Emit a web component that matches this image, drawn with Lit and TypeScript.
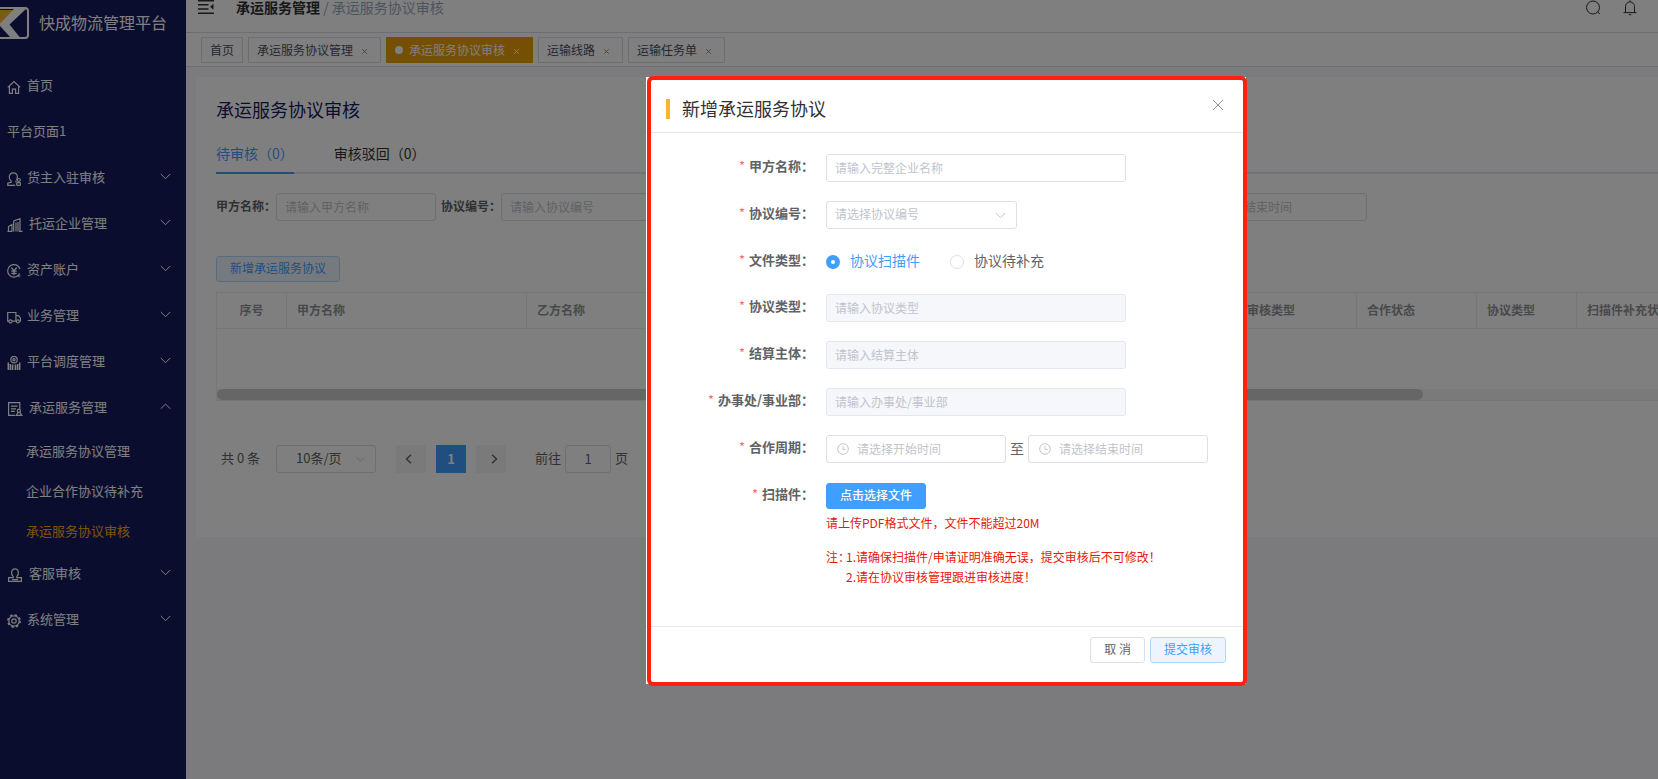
import { LitElement, html, css, svg, nothing } from "lit";
import { customElement, state } from "lit/decorators.js";
import { classMap } from "lit/directives/class-map.js";

const base = css`
  * {
    box-sizing: border-box;
  }
  button,
  input,
  select {
    font: inherit;
    color: inherit;
    margin: 0;
  }
  button {
    cursor: pointer;
  }
  svg {
    display: block;
    flex: none;
    fill: none;
    stroke: currentColor;
  }
  .field {
    height: 28px;
    padding: 0 8px 2px;
    border: 1px solid #dcdfe6;
    border-radius: 3px;
    background: #fff;
    color: #606266;
    font-size: 12px;
    line-height: 24px;
    outline: none;
  }
  .field::placeholder {
    color: #c0c4cc;
    opacity: 1;
  }
  .field.unset {
    color: #c0c4cc;
  }
  .field:disabled {
    background: #f5f7fa;
    border-color: #e4e7ed;
  }
  .with-icon {
    position: relative;
    display: flex;
  }
  .with-icon .field {
    width: 100%;
    padding-left: 30px;
  }
  .with-icon svg {
    position: absolute;
    left: 11px;
    top: 8px;
    color: #c0c4cc;
  }
  .select {
    position: relative;
    display: flex;
  }
  .select select {
    width: 100%;
    appearance: none;
    padding-right: 26px;
  }
  .select svg {
    position: absolute;
    right: 11px;
    top: 11px;
    color: #c0c4cc;
    pointer-events: none;
  }
  .plain {
    height: 26px;
    padding: 0 13px 2px;
    border: 1px solid #dcdfe6;
    border-radius: 3px;
    background: #fff;
    color: #606266;
    font-size: 12px;
    line-height: 22px;
    white-space: nowrap;
  }
  .soft {
    background: #ecf5ff;
    border-color: #b3d8ff;
    color: #409eff;
  }
  .solid {
    background: #409eff;
    border-color: #409eff;
    color: #fff;
    font-weight: 500;
  }
`;

const clock = html`<svg width="12" height="12" viewBox="0 0 12 12" aria-hidden="true">
  <circle cx="6" cy="6" r="5.3" /><path d="M6 2.8V6.4H8.6" />
</svg>`;

const chevron = (up = false, w = 11) => html`<svg width=${w} height="7" viewBox="0 0 11 7" aria-hidden="true">
  <path d=${up ? "M.8 5.7 5.5 1l4.7 4.7" : "M.8 1l4.7 4.7L10.2 1"} />
</svg>`;

const icons: Record<string, { w: number; shape: unknown }> = {
  home: { w: 14, shape: svg`<path d="M.8 7.4 7 1.6l6.2 5.8M2.4 6v7.3h3V9.2h3.2v4.1h3V6" />` },
  owner: {
    w: 14,
    shape: svg`<path d="M4.2 9C2.6 7.6 2 6.2 2.3 4.3 2.7 2.2 4.2.8 6.3.8s3.7 1.3 4 3.4c.2 1.6-.1 2.6-.8 3.6M4.2 8.8v1.4L.8 11.3v2h7.4M9 8.5v2" /><circle cx="11.8" cy="8" r="1.5" /><rect x="9.7" y="10.7" width="3.8" height="2.7" rx="1" />`,
  },
  company: {
    w: 16,
    shape: svg`<path d="M1.5 13.5V8.5L5 6.5V13.5M6.7 13.5V3L13 .8v12.7M9 13.5V4.5M11 13.5V4M.5 13.4H5.5M12 13.4h3.5" />`,
  },
  account: {
    w: 14,
    shape: svg`<path d="M12.7 9.5A6.3 6.3 0 1 1 13 5M11 12.2l2.4-.2M4.3 3.5 7 6.7l2.7-3.2M7 6.7v4.5M4.3 7.2h5.4M4.3 9.3h5.4" />`,
  },
  truck: {
    w: 14,
    shape: svg`<path d="M2 11.2H.7V2.5h8.2v8.7H5M8.9 5.6h2.6l2 2.6v3h-1M8.9 11.2h.4" /><circle cx="3.5" cy="11.4" r="1.5" /><circle cx="10.9" cy="11.4" r="1.5" />`,
  },
  dispatch: {
    w: 14,
    shape: svg`<circle cx="7" cy="3.7" r="3.2" /><circle cx="7" cy="3.7" r="1.1" /><path d="M1.3 13.9V6.5M3.3 13.9V8M10.7 13.9V8M12.7 13.9V6.5" stroke-width="1.5" /><path d="M5.5 13.9V8.5M8.5 13.9V8.5" stroke-width="1.8" />`,
  },
  service: {
    w: 16,
    shape: svg`<path d="M8 13.3H1.6V.7h11.2v6M4 4.2h6.5M4 6.8h5M4 9.4h3.8" /><circle cx="11.9" cy="8.8" r="1.6" /><path d="M11.2 10.4l-2 3h5.6l-2-3" />`,
  },
  support: {
    w: 16,
    shape: svg`<path d="M6.3 8.6C5 7.5 4.3 6 4.6 4.2 4.9 2.3 6.2.8 8 .8s3.1 1.5 3.4 3.4c.3 1.8-.4 3.3-1.7 4.4M6.3 8.4v1.3H1.6v3.7h12.8V9.7H9.7V8.4M5 11.6h6" />`,
  },
  system: {
    w: 14,
    shape: svg`<circle cx="7" cy="7" r="5.2" /><circle cx="7" cy="7" r="2.2" /><circle cx="7" cy="7" r="6.1" stroke-dasharray="2.4 2.39" stroke-width="1.6" />`,
  },
};

interface MenuItem {
  label: string;
  icon?: string;
  folds?: boolean;
  open?: boolean;
  children?: string[];
}

@customElement("side-menu")
export class SideMenu extends LitElement {
  static styles = [
    base,
    css`
      :host {
        display: block;
        width: 186px;
        flex: none;
        background: #161a5e;
        color: #fff;
        font-size: 13px;
      }
      .brand {
        display: flex;
        align-items: center;
        gap: 10px;
        height: 63px;
        padding-bottom: 17px;
        font-size: 16px;
        white-space: nowrap;
      }
      .brand span {
        padding-bottom: 2px;
      }
      ul {
        list-style: none;
        margin: 0;
        padding: 0;
      }
      .item {
        display: flex;
        align-items: center;
        gap: 6px;
        width: 100%;
        height: 46px;
        padding: 0 15px 0 7px;
        border: 0;
        background: none;
        text-align: left;
      }
      .glyph {
        margin-top: 2px;
      }
      .name {
        flex: 1;
        padding-bottom: 3px;
      }
      .item > svg:last-child {
        margin-bottom: 3px;
      }
      .sub {
        display: block;
        padding-left: 26px;
        line-height: 40px;
        color: #fff;
        text-decoration: none;
      }
      .current {
        color: #f9a80f;
      }
    `,
  ];

  @state() items: MenuItem[] = [
    { label: "首页", icon: "home" },
    { label: "平台页面1" },
    { label: "货主入驻审核", icon: "owner", folds: true },
    { label: "托运企业管理", icon: "company", folds: true },
    { label: "资产账户", icon: "account", folds: true },
    { label: "业务管理", icon: "truck", folds: true },
    { label: "平台调度管理", icon: "dispatch", folds: true },
    {
      label: "承运服务管理",
      icon: "service",
      folds: true,
      open: true,
      children: ["承运服务协议管理", "企业合作协议待补充", "承运服务协议审核"],
    },
    { label: "客服审核", icon: "support", folds: true },
    { label: "系统管理", icon: "system", folds: true },
  ];

  private toggle(item: MenuItem) {
    if (item.folds) this.items = this.items.map((i) => (i === item ? { ...i, open: !i.open } : i));
  }

  render() {
    return html`
      <div class="brand">
        <svg width="29" height="32" viewBox="0 0 29 32" aria-hidden="true">
          <path d="M0 3H14L0 17Z" fill="#f9b52b" stroke="none" />
          <path d="M14 2H26L9.5 17.5 20 30.5H10.5L0 19V16.5Z" fill="#fff" stroke="none" />
          <rect x="-6" y="1" width="34" height="30" rx="3" stroke="#fff" stroke-width="2" />
        </svg>
        <span>快成物流管理平台</span>
      </div>
      <nav>
        <ul>
          ${this.items.map((item) => {
            const icon = item.icon ? icons[item.icon] : undefined;
            return html`<li>
              <button class="item" @click=${() => this.toggle(item)}>
                ${icon
                  ? html`<svg class="glyph" width=${icon.w} height="14" viewBox="0 0 ${icon.w} 14" stroke-width="1.2" aria-hidden="true">${icon.shape}</svg>`
                  : nothing}
                <span class="name">${item.label}</span>
                ${item.folds ? chevron(item.open) : nothing}
              </button>
              ${item.open && item.children
                ? html`<ul>
                    ${item.children.map(
                      (c) => html`<li>
                        <a href="#" class=${classMap({ sub: true, current: c === "承运服务协议审核" })}>${c}</a>
                      </li>`
                    )}
                  </ul>`
                : nothing}
            </li>`;
          })}
        </ul>
      </nav>
    `;
  }
}

@customElement("agreement-dialog")
export class AgreementDialog extends LitElement {
  static styles = [
    base,
    css`
      :host {
        position: relative;
        display: block;
        width: 600px;
        background: #fff;
        color: #606266;
      }
      :host::after {
        content: "";
        position: absolute;
        inset: -1px -1px -2px 1px;
        border: 4px solid #ff2012;
        border-radius: 6px;
        pointer-events: none;
      }
      header {
        display: flex;
        align-items: center;
        height: 56px;
        padding: 8px 22px 0 20px;
        border-bottom: 1px solid #e8e8e8;
      }
      .bar {
        width: 4px;
        height: 20px;
        margin-right: 12px;
        background: #f9b52b;
      }
      h2 {
        flex: 1;
        margin: 0;
        padding-bottom: 2px;
        font-size: 18px;
        font-weight: 400;
        line-height: 24px;
        color: #303133;
      }
      .close {
        display: flex;
        padding: 0;
        margin-bottom: 7px;
        border: 0;
        background: none;
        color: #909399;
      }
      form {
        display: flex;
        flex-direction: column;
        gap: 19px;
        padding: 21px 38px 39px 0;
      }
      .row {
        display: grid;
        grid-template-columns: 168px 1fr;
        column-gap: 12px;
      }
      .label {
        text-align: right;
        font-size: 13px;
        font-weight: 700;
        line-height: 23px;
        white-space: nowrap;
      }
      .label::before {
        content: "*";
        margin-right: 4px;
        color: #f56c6c;
        font-weight: 400;
      }
      .wide {
        width: 300px;
      }
      .mid {
        width: 191px;
      }
      .radios {
        display: flex;
        align-items: center;
        gap: 30px;
        height: 27px;
        font-size: 14px;
        line-height: 20px;
      }
      .radio {
        display: flex;
        align-items: center;
        gap: 10px;
      }
      .radio span {
        padding-bottom: 3px;
      }
      .radio input {
        appearance: none;
        width: 14px;
        height: 14px;
        border: 1px solid #dcdfe6;
        border-radius: 50%;
        background: #fff;
      }
      .radio input:checked {
        border: 5px solid #409eff;
      }
      .radio:has(input:checked) {
        color: #409eff;
      }
      .range {
        display: flex;
        align-items: center;
        gap: 4px;
        font-size: 14px;
      }
      .range label {
        padding-bottom: 3px;
      }
      .range .with-icon {
        width: 180px;
      }
      .upload {
        display: flex;
        flex-direction: column;
        align-items: flex-start;
        padding-top: 1px;
        font-size: 12px;
        line-height: 20px;
        color: #e7180b;
      }
      .tip {
        margin: 4px 0 14px;
      }
      .notes {
        display: flex;
      }
      .notes span {
        width: 20px;
        white-space: nowrap;
      }
      .notes p {
        margin: 0;
      }
      footer {
        display: flex;
        justify-content: flex-end;
        gap: 5px;
        padding: 10px 20px 21px;
        border-top: 1px solid #e8e8e8;
      }
    `,
  ];

  private textRow(id: string, label: string, placeholder: string, disabled: boolean) {
    return html`<div class="row">
      <label class="label" for=${id}>${label}：</label>
      <div><input id=${id} class="field wide" type="text" placeholder=${placeholder} ?disabled=${disabled} /></div>
    </div>`;
  }

  render() {
    return html`
      <header>
        <span class="bar"></span>
        <h2>新增承运服务协议</h2>
        <button class="close" aria-label="关闭">
          <svg width="12" height="12" viewBox="0 0 12 12"><path d="M1 1l10 10M11 1 1 11" /></svg>
        </button>
      </header>
      <form @submit=${(e: Event) => e.preventDefault()}>
        ${this.textRow("party", "甲方名称", "请输入完整企业名称", false)}
        <div class="row">
          <label class="label" for="number">协议编号：</label>
          <div class="select mid">
            <select id="number" class="field unset"><option>请选择协议编号</option></select>
            ${chevron()}
          </div>
        </div>
        <div class="row">
          <span class="label" id="kind">文件类型：</span>
          <div class="radios" role="radiogroup" aria-labelledby="kind">
            <label class="radio"><input type="radio" name="kind" checked /><span>协议扫描件</span></label>
            <label class="radio"><input type="radio" name="kind" /><span>协议待补充</span></label>
          </div>
        </div>
        ${this.textRow("type", "协议类型", "请输入协议类型", true)}
        ${this.textRow("subject", "结算主体", "请输入结算主体", true)}
        ${this.textRow("office", "办事处/事业部", "请输入办事处/事业部", true)}
        <div class="row">
          <label class="label" for="from">合作周期：</label>
          <div class="range">
            <div class="with-icon">${clock}<input id="from" class="field" placeholder="请选择开始时间" /></div>
            <label for="to">至</label>
            <div class="with-icon">${clock}<input id="to" class="field" placeholder="请选择结束时间" /></div>
          </div>
        </div>
        <div class="row">
          <span class="label">扫描件：</span>
          <div class="upload">
            <button type="button" class="plain solid">点击选择文件</button>
            <p class="tip">请上传PDF格式文件，文件不能超过20M</p>
            <div class="notes">
              <span>注：</span>
              <div>
                <p>1.请确保扫描件/申请证明准确无误，提交审核后不可修改！</p>
                <p>2.请在协议审核管理跟进审核进度！</p>
              </div>
            </div>
          </div>
        </div>
      </form>
      <footer>
        <button class="plain">取 消</button>
        <button class="plain soft">提交审核</button>
      </footer>
    `;
  }
}

@customElement("app-root")
export class AppRoot extends LitElement {
  static styles = [
    base,
    css`
      :host {
        display: flex;
        min-height: 100vh;
        overflow: hidden;
        background: #f6f6fa;
        color: #303133;
        font-family: "Noto Sans CJK SC", "Noto Sans", sans-serif;
        font-size: 14px;
      }
      .page {
        flex: 1;
        min-width: 0;
      }
      .top {
        display: flex;
        align-items: flex-start;
        height: 33px;
        padding: 0 20px 0 12px;
        background: #fff;
        border-bottom: 1px solid #d8dce5;
        line-height: 14px;
      }
      .icon {
        display: flex;
        padding: 0;
        border: 0;
        background: none;
      }
      .crumbs {
        flex: 1;
        margin-left: 22px;
        color: #97a8be;
      }
      .crumbs b {
        color: #303133;
      }
      .tools {
        display: flex;
        gap: 21px;
      }
      .tabs {
        display: flex;
        gap: 5px;
        padding: 4px 15px 3px;
        background: #fff;
        border-bottom: 1px solid #d8dce5;
      }
      .tab {
        display: flex;
        align-items: center;
        height: 26px;
        padding: 0 8px 1px;
        border: 1px solid #d8dce5;
        background: #fff;
        color: #495060;
        font-size: 12px;
        white-space: nowrap;
      }
      .tab svg {
        margin: 3px 5px 0 9px;
        color: #8a8f99;
      }
      .tab.active {
        background: #eb9f06;
        border-color: #eb9f06;
        color: #fff;
      }
      .tab.active svg {
        color: #fff;
      }
      .dot {
        width: 8px;
        height: 8px;
        margin-right: 6px;
        border-radius: 50%;
        background: #fff;
      }
      .card {
        margin: 10px 0 0 10px;
        padding: 19px 0 64px 20px;
        background: #fff;
      }
      h1 {
        margin: 0;
        color: #161a5e;
        font-size: 18px;
        font-weight: 400;
        line-height: 26px;
      }
      .views {
        display: flex;
        gap: 40px;
        margin-top: 12px;
        border-bottom: 2px solid #e4e7ed;
      }
      .view {
        height: 40px;
        margin-bottom: -2px;
        padding: 0;
        border: 0;
        border-bottom: 2px solid transparent;
        background: none;
      }
      .view.active {
        color: #409eff;
        border-color: #409eff;
      }
      .search {
        display: flex;
        align-items: center;
        margin-top: 19px;
        font-size: 12px;
        white-space: nowrap;
      }
      .search > label {
        width: 60px;
        padding-bottom: 3px;
        color: #606266;
        font-weight: 700;
      }
      .search > .field {
        width: 160px;
        margin-right: 5px;
      }
      .search .with-icon {
        width: 190px;
      }
      .search .to {
        width: 36px;
        text-align: center;
        font-weight: 400;
      }
      .add {
        margin: 35px 0 10px;
      }
      .grid {
        overflow: hidden;
        border: 1px solid #ebeef5;
        border-right: 0;
      }
      table {
        width: 1771px;
        table-layout: fixed;
        border-collapse: separate;
        border-spacing: 0;
      }
      th {
        height: 36px;
        padding: 0 10px 2px;
        border-right: 1px solid #ebeef5;
        border-bottom: 1px solid #ebeef5;
        color: #909399;
        font-size: 12px;
        font-weight: 700;
        text-align: left;
      }
      th:first-child {
        text-align: center;
      }
      .empty {
        height: 60px;
        padding: 0;
      }
      .track {
        height: 11px;
        background: #f5f5f5;
      }
      .thumb {
        width: 83.7%;
        height: 11px;
        border-radius: 6px;
        background: #ccc;
      }
      .pager {
        display: flex;
        align-items: center;
        margin-top: 44px;
        padding-left: 5px;
        font-size: 13px;
        color: #606266;
      }
      .pager > span {
        padding-bottom: 3px;
      }
      .size {
        width: 100px;
        margin: 0 20px 0 16px;
      }
      .size .field {
        padding-left: 19px;
        font-size: 13px;
      }
      .num {
        width: 30px;
        height: 28px;
        margin-right: 10px;
        padding: 0 0 1px;
        border: 0;
        background: #f4f4f5;
        display: grid;
        place-items: center;
        font-weight: 700;
      }
      .prev {
        padding-right: 6px;
      }
      .next {
        padding-left: 6px;
      }
      .num.active {
        background: #409eff;
        color: #fff;
      }
      .jump {
        display: flex;
        align-items: center;
        gap: 4px;
        margin-left: 19px;
      }
      .jump span {
        padding-bottom: 3px;
      }
      .jump .field {
        width: 46px;
        text-align: center;
        font-size: 13px;
      }
      .overlay {
        position: fixed;
        inset: 0;
        display: flex;
        justify-content: center;
        align-items: flex-start;
        padding: 77px 0 0 234px;
        overflow: auto;
        background: rgba(0, 0, 0, 0.5);
      }
    `,
  ];

  @state() view = 0;

  private tabs = ["首页", "承运服务协议管理", "承运服务协议审核", "运输线路", "运输任务单"];
  private columns: [string, number][] = [
    ["序号", 70],
    ["甲方名称", 240],
    ["乙方名称", 240],
    ["协议编号", 170],
    ["合作周期", 180],
    ["提交时间", 120],
    ["审核类型", 120],
    ["合作状态", 120],
    ["协议类型", 100],
    ["扫描件补充状态", 140],
    ["操作", 271],
  ];

  render() {
    return html`
      <side-menu></side-menu>
      <div class="page">
        <div class="top">
          <button class="icon" aria-label="收起菜单">
            <svg width="16" height="15" viewBox="0 0 16 15" stroke-width="1.6">
              <path d="M0 .8h16M0 4.8h10.5M0 9h10.5M0 13.3h16" />
              <path d="M15.5 3.8v6L12 6.8Z" fill="currentColor" stroke="none" />
            </svg>
          </button>
          <div class="crumbs"><b>承运服务管理</b> / 承运服务协议审核</div>
          <div class="tools">
            <button class="icon" aria-label="搜索">
              <svg width="16" height="16" viewBox="0 0 16 16">
                <circle cx="8" cy="7.5" r="6.5" /><path d="m12.3 11.5 2.5 2.5" />
              </svg>
            </button>
            <button class="icon" aria-label="通知">
              <svg width="16" height="16" viewBox="0 0 16 16">
                <path d="M8 .4v1.4M3.5 12.5V6.4a4.5 4.5 0 0 1 9 0v6.1M1.5 12.6h13M6.8 14.7h2.4" />
              </svg>
            </button>
          </div>
        </div>
        <nav class="tabs">
          ${this.tabs.map(
            (t, i) => html`<button class=${classMap({ tab: true, active: i === 2 })}>
              ${i === 2 ? html`<span class="dot"></span>` : nothing}${t}${i
                ? html`<svg width="5" height="5" viewBox="0 0 5 5" aria-hidden="true"><path d="M.3.3l4.4 4.4M4.7.3.3 4.7" /></svg>`
                : nothing}
            </button>`
          )}
        </nav>
        <main class="card">
          <h1>承运服务协议审核</h1>
          <div class="views">
            ${["待审核（0）", "审核驳回（0）"].map(
              (v, i) => html`<button
                class=${classMap({ view: true, active: i === this.view })}
                @click=${() => (this.view = i)}
              >
                ${v}
              </button>`
            )}
          </div>
          <div class="search">
            <label for="s-party">甲方名称：</label>
            <input id="s-party" class="field" placeholder="请输入甲方名称" />
            <label for="s-number">协议编号：</label>
            <input id="s-number" class="field" placeholder="请输入协议编号" />
            <label for="s-type">协议类型：</label>
            <input id="s-type" class="field" placeholder="请输入协议类型" />
            <label for="s-from">合作周期：</label>
            <div class="with-icon">${clock}<input id="s-from" class="field" placeholder="请选择开始时间" /></div>
            <label class="to" for="s-to">至</label>
            <div class="with-icon">${clock}<input id="s-to" class="field" placeholder="请选择结束时间" /></div>
          </div>
          <button class="plain soft add">新增承运服务协议</button>
          <div class="grid">
            <table>
              <colgroup>
                ${this.columns.map(([, w]) => html`<col width=${w} />`)}
              </colgroup>
              <thead>
                <tr>
                  ${this.columns.map(([c]) => html`<th>${c}</th>`)}
                </tr>
              </thead>
              <tbody>
                <tr><td class="empty" colspan=${this.columns.length}></td></tr>
              </tbody>
            </table>
            <div class="track"><div class="thumb"></div></div>
          </div>
          <div class="pager">
            <span>共 0 条</span>
            <div class="select size">
              <select class="field" aria-label="每页条数"><option>10条/页</option></select>
              ${chevron(false, 9)}
            </div>
            <button class="num prev" aria-label="上一页">
              <svg width="7" height="10" viewBox="0 0 7 10" stroke-width="1.4"><path d="M6 .8 1.5 5 6 9.2" /></svg>
            </button>
            <button class="num active">1</button>
            <button class="num next" aria-label="下一页">
              <svg width="7" height="10" viewBox="0 0 7 10" stroke-width="1.4"><path d="M1 .8 5.5 5 1 9.2" /></svg>
            </button>
            <label class="jump"><span>前往</span><input class="field" value="1" /><span>页</span></label>
          </div>
        </main>
      </div>
      <div class="overlay"><agreement-dialog role="dialog" aria-modal="true"></agreement-dialog></div>
    `;
  }
}
